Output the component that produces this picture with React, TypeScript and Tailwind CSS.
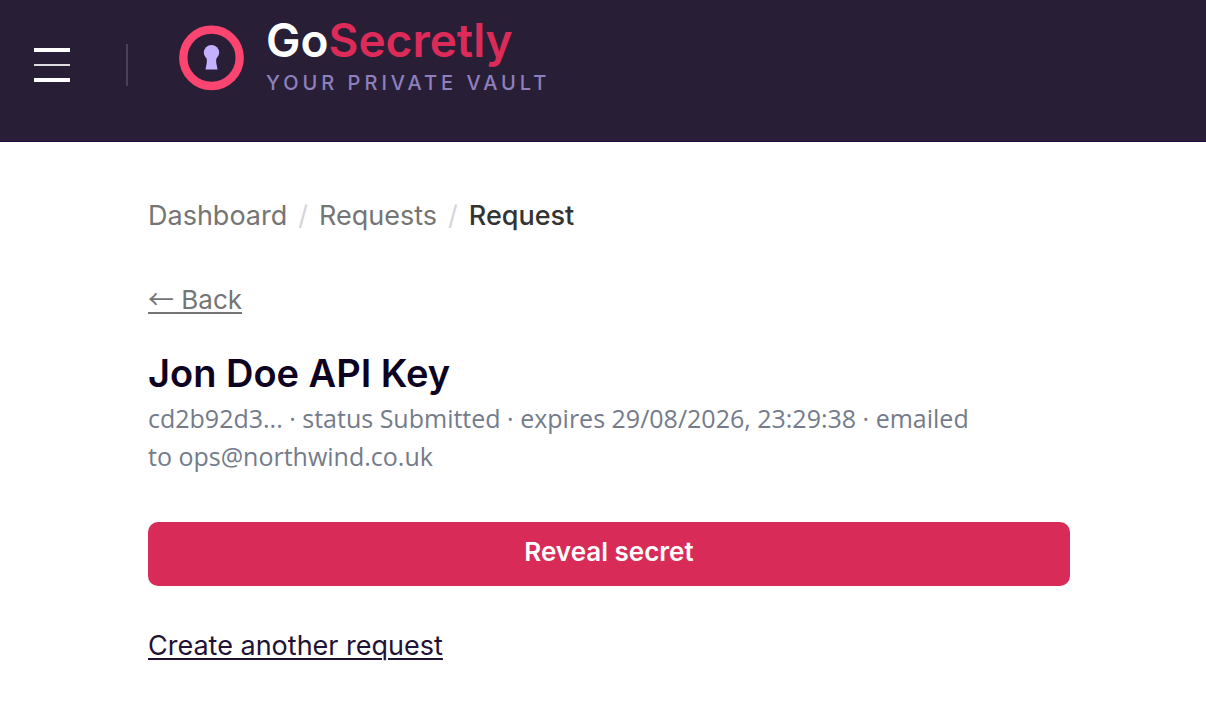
const crumbs = [
  { label: "Dashboard", href: "#dashboard" },
  { label: "Requests", href: "#requests" },
];

function LogoMark() {
  return (
    <svg viewBox="0 0 66 66" className="size-[66px] shrink-0" aria-hidden="true">
      <circle cx="33.5" cy="32.8" r="28.2" fill="none" stroke="#fb4570" strokeWidth="8.4" />
      <circle cx="33.5" cy="27.6" r="7.7" fill="#c4b1fd" />
      <path d="M28.8 31h9.4v6.5l1.3 7H27.5l1.3-7z" fill="#c4b1fd" />
    </svg>
  );
}

function Header() {
  return (
    <header className="flex h-[142px] items-start border-b border-[#1f0a45] bg-[#281f36] pl-[34px]">
      <button type="button" aria-label="Open menu" className="mt-12 flex h-[34px] w-9 flex-col justify-between">
        <span className="h-1 w-full bg-white" />
        <span className="h-0.5 w-full bg-[#dddbe0]" />
        <span className="h-1 w-full bg-white" />
      </button>
      <div className="mt-11 ml-14 h-[42px] w-0.5 bg-[#49415a]" />
      <a href="#home" className="mt-[18px] ml-[50px] flex items-start gap-[22px]">
        <span className="pt-[7px]">
          <LogoMark />
        </span>
        <span className="flex flex-col">
          <span className="text-[46px] leading-[44px] font-semibold text-white">
            Go<span className="text-[#dc2b58]">Secretly</span>
          </span>
          <span className="mt-[9px] text-[20px] leading-6 font-medium tracking-[4px] text-[#8f7fbd] uppercase">
            Your private vault
          </span>
        </span>
      </a>
    </header>
  );
}

export default function App() {
  return (
    <div className="min-h-screen bg-white font-['Inter','Liberation_Sans',sans-serif]">
      <Header />
      <main className="flex flex-col items-start pt-14 pr-[136px] pl-[148px]">
        <nav aria-label="Breadcrumb" className="flex gap-[11px] text-[27px] leading-9 text-[#757575]">
          {crumbs.map((crumb) => (
            <span key={crumb.label} className="flex gap-[11px]">
              <a href={crumb.href}>{crumb.label}</a>
              <span className="text-[#d5d5da]">/</span>
            </span>
          ))}
          <span aria-current="page" className="font-medium text-[#333333]">Request</span>
        </nav>

        <a href="#requests" className="mt-12 text-[26px] leading-9 text-[#757575] underline decoration-2 underline-offset-3">
          <span className="font-['Noto_Sans_CJK_JP',sans-serif] leading-none">←</span> Back
        </a>

        <h1 className="mt-[31px] text-[38px] leading-[48px] font-semibold text-[#0d0221]">Jon Doe API Key</h1>
        <p className="mt-0.5 font-['Open_Sans','Noto_Sans',sans-serif] text-[25px] leading-[38px] text-[#747b8a]">
          cd2b92d3... · status Submitted · expires 29/08/2026, 23:29:38 · emailed{" "}
          <span className="inline-block">to ops@northwind.co.uk</span>
        </p>

        <button
          type="button"
          className="mt-[47px] w-full rounded-[10px] bg-[#d82b57] pt-3 pb-4 text-[26px] leading-9 font-semibold text-white"
        >
          Reveal secret
        </button>

        <a href="#new" className="mt-[42px] text-[27px] leading-9 text-[#1f1235] underline decoration-2 underline-offset-3">
          Create another request
        </a>
      </main>
    </div>
  );
}
